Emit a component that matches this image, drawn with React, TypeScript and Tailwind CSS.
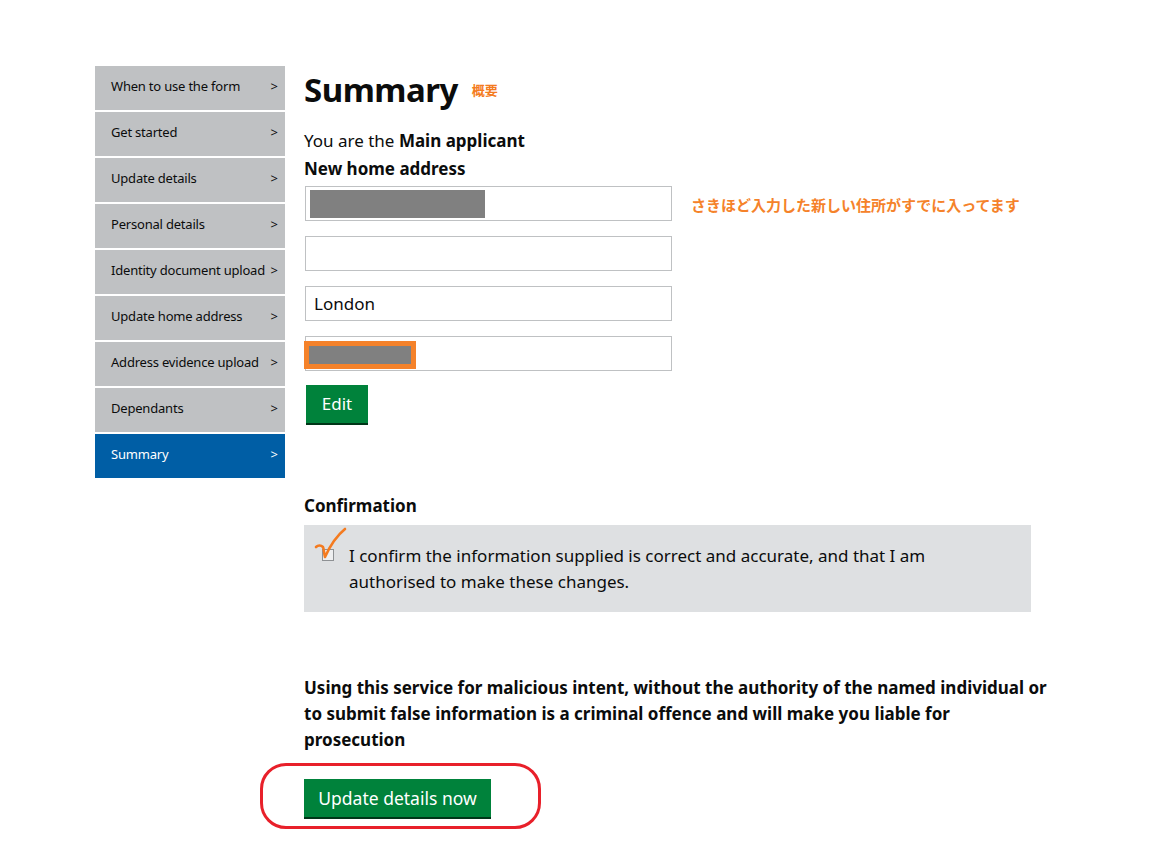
import { ReactNode } from 'react';

const steps = [
  'When to use the form',
  'Get started',
  'Update details',
  'Personal details',
  'Identity document upload',
  'Update home address',
  'Address evidence upload',
  'Dependants',
  'Summary',
];

const font = { fontFamily: '"Noto Sans", "Noto Sans CJK JP", sans-serif' };

const AddressField = ({ children }: { children?: ReactNode }) => (
  <div className="relative h-[35px] w-[367px] border border-[#bfc1c3] bg-white flex items-center px-[8px] text-[17px] text-[#0b0c0c]">
    {children}
  </div>
);

const GreenButton = ({ children, className = '' }: { children: ReactNode; className?: string }) => (
  <button
    className={`bg-[#00823b] text-white shadow-[0_2px_0_#003618] flex items-center justify-center ${className}`}
  >
    {children}
  </button>
);

export default function App() {
  return (
    <div className="min-h-[858px] w-[1158px] bg-white text-[#0b0c0c]" style={font}>
      <div className="flex pl-[95px] pt-[66px] gap-[19px]">
        {/* step navigation */}
        <nav className="w-[190px] flex flex-col gap-[2px] shrink-0">
          {steps.map((s) => {
            const active = s === 'Summary';
            return (
              <div
                key={s}
                className={`h-[44px] flex items-center justify-between pl-[16px] pr-[7px] pb-[2px] text-[13px] ${
                  active ? 'bg-[#005ea5] text-white' : 'bg-[#bfc1c3] text-[#0b0c0c]'
                }`}
              >
                <span className="tracking-[-0.2px]">{s}</span>
                <span>&gt;</span>
              </div>
            );
          })}
        </nav>

        <main className="flex-1">
          <div className="flex items-end gap-[14px] h-[40px]">
            <h1 className="text-[33px] font-bold leading-none tracking-[-0.5px]">Summary</h1>
            <span className="text-[13px] font-bold text-[#f47b20] mb-[6px]">概要</span>
          </div>

          <p className="mt-[21px] text-[17px] leading-[28px]">
            You are the <span className="font-bold">Main applicant</span>
          </p>
          <p className="text-[17px] font-bold leading-[28px]">New home address</p>

          <div className="flex items-start gap-[19px] mt-[3px]">
            <div className="flex flex-col gap-[15px] pl-[1px]">
              <AddressField>
                <div className="h-[28px] w-[175px] bg-[#808080] -ml-[4px]" />
              </AddressField>
              <AddressField />
              <AddressField>London</AddressField>
              <AddressField>
                <div className="absolute -left-[2px] top-[4px] h-[28px] w-[112px] border-[5px] border-[#f5822a] bg-[#808080]" />
              </AddressField>
              <GreenButton className="h-[38px] w-[62px] mt-[-1px] ml-[1px] text-[17px]">Edit</GreenButton>
            </div>
            <p className="mt-[8px] text-[15px] font-bold text-[#f5822a]">
              さきほど入力した新しい住所がすでに入ってます
            </p>
          </div>

          <h2 className="mt-[69px] mb-[5px] text-[17px] font-bold leading-[28px]">Confirmation</h2>
          <div className="relative w-[727px] h-[87px] bg-[#dee0e2] flex items-start pt-[18px] pl-[18px] gap-[15px]">
            <div className="relative mt-[6px] h-[12px] w-[12px] border border-[#8e9194] bg-[#eeeff0] shrink-0">
              <svg
                className="absolute -left-[8px] -top-[22px] overflow-visible"
                width="32"
                height="34"
                viewBox="0 0 32 34"
                fill="none"
              >
                <path
                  d="M1 19 C3 17 6 17 8 19 C9 21 9 26 10 29 C14 20 19 10 30 1"
                  stroke="#f47b20"
                  strokeWidth="2.6"
                  strokeLinecap="round"
                  strokeLinejoin="round"
                />
              </svg>
            </div>
            <p className="text-[17px] leading-[26px]">
              I confirm the information supplied is correct and accurate, and that I am
              <br />
              authorised to make these changes.
            </p>
          </div>

          <p className="mt-[63px] text-[17px] font-bold leading-[26px]">
            Using this service for malicious intent, without the authority of the named individual or
            <br />
            to submit false information is a criminal offence and will make you liable for
            <br />
            prosecution
          </p>

          <div className="relative mt-[26px] w-fit">
            <GreenButton className="h-[38px] w-[187px] text-[17.5px]">Update details now</GreenButton>
            <div className="absolute -left-[44px] -top-[16px] h-[66px] w-[281px] rounded-[26px] border-[3px] border-[#e8202a]" />
          </div>
        </main>
      </div>
    </div>
  );
}
